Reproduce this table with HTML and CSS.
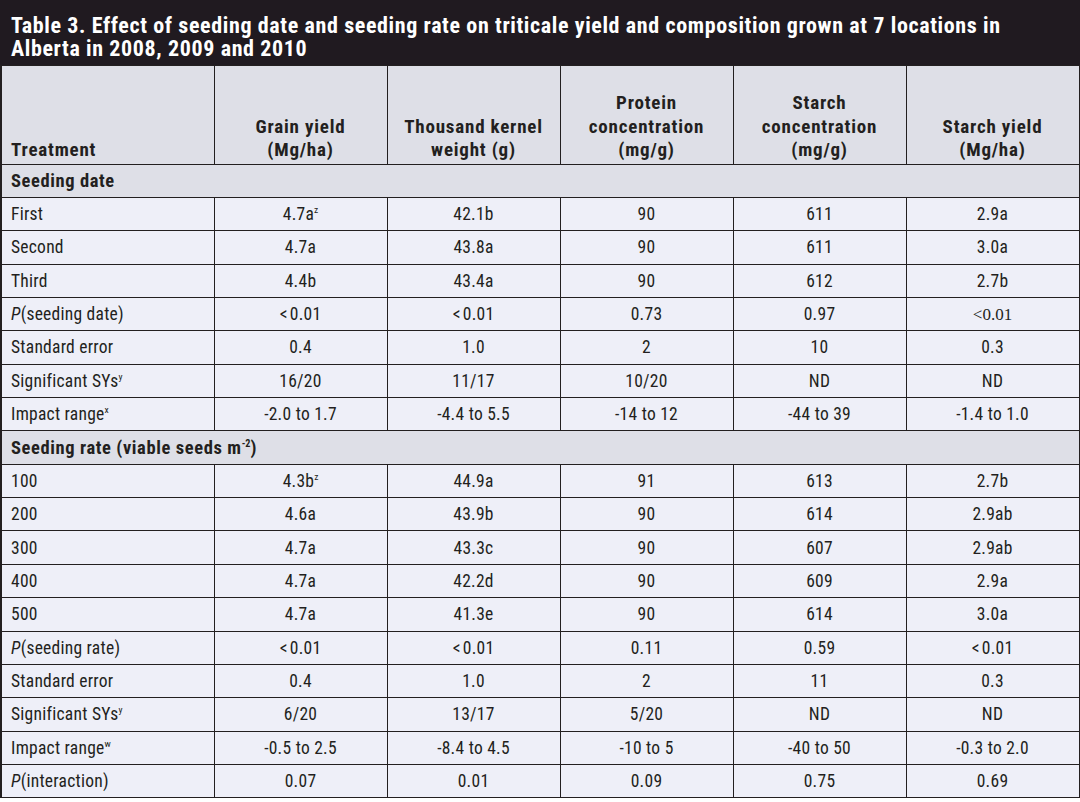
FILE: index.html
```html
<!DOCTYPE html>
<html>
<head>
<meta charset="utf-8">
<link rel="stylesheet" href="styles.css">
</head>
<body>
<div class="sheet">
  <div class="title">Table 3. Effect of seeding date and seeding rate on triticale yield and composition grown at 7 locations in<br>Alberta in 2008, 2009 and 2010</div>
  <table class="data">
    <colgroup>
      <col class="c-treat"><col class="c-num"><col class="c-num"><col class="c-num"><col class="c-num"><col class="c-num">
    </colgroup>
    <thead>
      <tr class="head">
        <th class="left">Treatment</th>
        <th>Grain yield<br>(Mg/ha)</th>
        <th>Thousand kernel<br>weight (g)</th>
        <th>Protein<br>concentration<br>(mg/g)</th>
        <th>Starch<br>concentration<br>(mg/g)</th>
        <th>Starch yield<br>(Mg/ha)</th>
      </tr>
    </thead>
    <tbody>
      <tr class="section"><td colspan="6">Seeding date</td></tr>
      <tr><td>First</td><td>4.7a<sup>z</sup></td><td>42.1b</td><td>90</td><td>611</td><td>2.9a</td></tr>
      <tr><td>Second</td><td>4.7a</td><td>43.8a</td><td>90</td><td>611</td><td>3.0a</td></tr>
      <tr><td>Third</td><td>4.4b</td><td>43.4a</td><td>90</td><td>612</td><td>2.7b</td></tr>
      <tr><td><i>P</i>(seeding date)</td><td><span class="lt">&lt;</span>0.01</td><td><span class="lt">&lt;</span>0.01</td><td>0.73</td><td>0.97</td><td><span class="serif">&lt;0.01</span></td></tr>
      <tr><td>Standard error</td><td>0.4</td><td>1.0</td><td>2</td><td>10</td><td>0.3</td></tr>
      <tr><td>Significant SYs<sup>y</sup></td><td>16/20</td><td>11/17</td><td>10/20</td><td>ND</td><td>ND</td></tr>
      <tr><td>Impact range<sup>x</sup></td><td>-2.0 to 1.7</td><td>-4.4 to 5.5</td><td>-14 to 12</td><td>-44 to 39</td><td>-1.4 to 1.0</td></tr>
      <tr class="section"><td colspan="6">Seeding rate (viable seeds m<sup>-2</sup>)</td></tr>
      <tr><td>100</td><td>4.3b<sup>z</sup></td><td>44.9a</td><td>91</td><td>613</td><td>2.7b</td></tr>
      <tr><td>200</td><td>4.6a</td><td>43.9b</td><td>90</td><td>614</td><td>2.9ab</td></tr>
      <tr><td>300</td><td>4.7a</td><td>43.3c</td><td>90</td><td>607</td><td>2.9ab</td></tr>
      <tr><td>400</td><td>4.7a</td><td>42.2d</td><td>90</td><td>609</td><td>2.9a</td></tr>
      <tr><td>500</td><td>4.7a</td><td>41.3e</td><td>90</td><td>614</td><td>3.0a</td></tr>
      <tr><td><i>P</i>(seeding rate)</td><td><span class="lt">&lt;</span>0.01</td><td><span class="lt">&lt;</span>0.01</td><td>0.11</td><td>0.59</td><td><span class="lt">&lt;</span>0.01</td></tr>
      <tr><td>Standard error</td><td>0.4</td><td>1.0</td><td>2</td><td>11</td><td>0.3</td></tr>
      <tr><td>Significant SYs<sup>y</sup></td><td>6/20</td><td>13/17</td><td>5/20</td><td>ND</td><td>ND</td></tr>
      <tr><td>Impact range<sup>w</sup></td><td>-0.5 to 2.5</td><td>-8.4 to 4.5</td><td>-10 to 5</td><td>-40 to 50</td><td>-0.3 to 2.0</td></tr>
      <tr><td><i>P</i>(interaction)</td><td>0.07</td><td>0.01</td><td>0.09</td><td>0.75</td><td>0.69</td></tr>
    </tbody>
  </table>
</div>
</body>
</html>
```

FILE: styles.css
```css
html, body {
  margin: 0;
  padding: 0;
  background: #ffffff;
}

.sheet {
  width: 1080px;
  font-family: "Roboto Condensed", "Liberation Sans Narrow", "Arial Narrow", "DejaVu Sans Condensed", sans-serif;
  color: #231f20;
}

.title {
  box-sizing: border-box;
  height: 65px;
  background: #201a20;
  color: #ffffff;
  font-weight: bold;
  font-size: 22px;
  letter-spacing: 0.62px;
  line-height: 23px;
  padding: 14px 10px 0 11px;
  white-space: nowrap;
}

.data {
  width: 1079px;
  border-collapse: collapse;
  table-layout: fixed;
  border-left: 2px solid #231f20;
}

.c-treat { width: 213px; }
.c-num { width: 173px; }

.data th,
.data td {
  border: 1px solid #231f20;
  padding: 0 10px;
  text-align: center;
  vertical-align: middle;
  white-space: nowrap;
}

.data td {
  background: #eeeff8;
  font-size: 17.5px;
  letter-spacing: 0.25px;
  height: 33.37px;
  box-sizing: border-box;
}

.data td:first-child {
  text-align: left;
  padding-left: 9px;
}

.head th {
  background: #dedfe7;
  font-size: 19px;
  letter-spacing: 0.8px;
  line-height: 23.5px;
  font-weight: bold;
  vertical-align: bottom;
  height: 95.5px;
  padding-bottom: 2px;
}

.head th.left {
  text-align: left;
  padding-left: 9px;
}

.section td {
  background: #dedfe7;
  font-weight: bold;
  font-size: 18.5px;
  letter-spacing: 0.6px;
}

sup {
  font-size: 0.55em;
  line-height: 0;
  vertical-align: 0.7em;
  letter-spacing: 0;
}

.lt {
  padding-right: 2px;
}

.serif {
  font-family: "Liberation Serif", serif;
  font-size: 17px;
  letter-spacing: 0;
}
```
